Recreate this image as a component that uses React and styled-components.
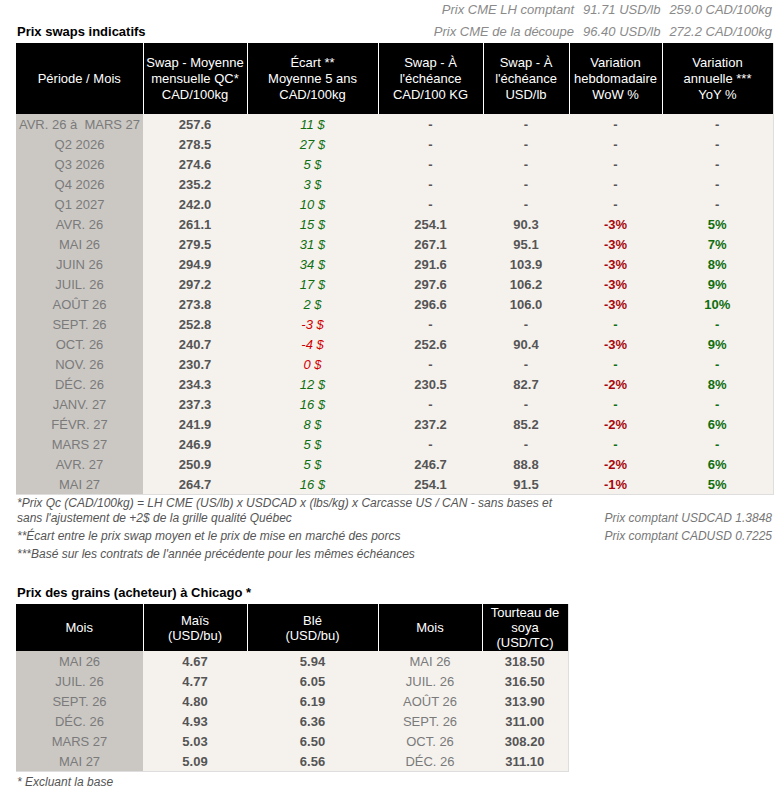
import React from "react";
import styled, { createGlobalStyle } from "styled-components";

const GlobalStyle = createGlobalStyle`
  body {
    margin: 0;
    background: #fff;
    font-family: "Liberation Sans", Arial, Helvetica, sans-serif;
    font-size: 13px;
    color: #555;
  }
`;

const Page = styled.div`
  width: 757px;
  padding: 0 4px 0 16px;
`;

const TopBar = styled.div`
  display: flex;
  justify-content: space-between;
  align-items: flex-end;
  height: 43px;
`;

const Title = styled.h2`
  margin: 0 0 0 1px;
  font-size: 13px;
  font-weight: bold;
  color: #000;
  line-height: 22px;
`;

const CmeGrid = styled.div`
  display: grid;
  grid-template-columns: auto auto auto;
  column-gap: 9px;
  font-style: italic;
  color: #8a8a8a;
  font-size: 13px;
  line-height: 22px;
  margin-right: 1px;
`;

const CmeLabel = styled.span`
  text-align: right;
`;

const Table = styled.table`
  border-collapse: collapse;
  table-layout: fixed;
  width: ${(p) => p.$width}px;
  border-right: 1px solid #dedede;
  border-bottom: 1px solid #dedede;
`;

const Th = styled.th`
  background: #000;
  color: #fff;
  font-weight: normal;
  font-size: 13px;
  line-height: ${(p) => p.$lh || 16}px;
  height: ${(p) => p.$h}px;
  padding: 0 1px;
  text-align: center;
  vertical-align: middle;
  border-left: 1px solid #fff;
  &:first-child {
    border-left: none;
  }
`;

const toneColor = {
  up: "#0f6e0f",
  down: "#a8070d",
  neg: "#d00000",
};

const Td = styled.td`
  height: 20px;
  box-sizing: border-box;
  padding: 2px 0 0;
  text-align: center;
  white-space: nowrap;
  font-size: 13px;
  line-height: 18px;
  background: ${(p) => (p.$label ? "#cbc8c4" : "#f5f2ee")};
  color: ${(p) => (p.$tone ? toneColor[p.$tone] : p.$label || p.$plain ? "#7a7a7a" : "#555")};
  font-weight: ${(p) => (p.$label || p.$plain || p.$italic ? "normal" : "bold")};
  font-style: ${(p) => (p.$italic ? "italic" : "normal")};
`;

const Notes = styled.div`
  display: grid;
  grid-template-columns: auto auto;
  justify-content: space-between;
  align-items: end;
  row-gap: 3px;
  padding: 1px 0 0 1px;
  font-style: italic;
  font-size: 12px;
  line-height: 15px;
  color: #555;
`;

const Note = styled.div`
  white-space: nowrap;
`;

const Spot = styled.div`
  text-align: right;
  color: #777;
  padding-right: 1px;
`;

const GrainTitle = styled(Title)`
  margin-top: 19px;
  line-height: 23px;
`;

const FootNote = styled.div`
  font-style: italic;
  font-size: 12px;
  line-height: 20px;
  color: #555;
  padding-left: 1px;
`;

const swapRows = [
  ["AVR. 26 à\u00a0 MARS 27", "257.6", "11 $", "-", "-", "-", "-"],
  ["Q2 2026", "278.5", "27 $", "-", "-", "-", "-"],
  ["Q3 2026", "274.6", "5 $", "-", "-", "-", "-"],
  ["Q4 2026", "235.2", "3 $", "-", "-", "-", "-"],
  ["Q1 2027", "242.0", "10 $", "-", "-", "-", "-"],
  ["AVR. 26", "261.1", "15 $", "254.1", "90.3", "-3%", "5%"],
  ["MAI 26", "279.5", "31 $", "267.1", "95.1", "-3%", "7%"],
  ["JUIN 26", "294.9", "34 $", "291.6", "103.9", "-3%", "8%"],
  ["JUIL. 26", "297.2", "17 $", "297.6", "106.2", "-3%", "9%"],
  ["AOÛT 26", "273.8", "2 $", "296.6", "106.0", "-3%", "10%"],
  ["SEPT. 26", "252.8", "-3 $", "-", "-", "-", "-"],
  ["OCT. 26", "240.7", "-4 $", "252.6", "90.4", "-3%", "9%"],
  ["NOV. 26", "230.7", "0 $", "-", "-", "-", "-"],
  ["DÉC. 26", "234.3", "12 $", "230.5", "82.7", "-2%", "8%"],
  ["JANV. 27", "237.3", "16 $", "-", "-", "-", "-"],
  ["FÉVR. 27", "241.9", "8 $", "237.2", "85.2", "-2%", "6%"],
  ["MARS 27", "246.9", "5 $", "-", "-", "-", "-"],
  ["AVR. 27", "250.9", "5 $", "246.7", "88.8", "-2%", "6%"],
  ["MAI 27", "264.7", "16 $", "254.1", "91.5", "-1%", "5%"],
];

const grainRows = [
  ["MAI 26", "4.67", "5.94", "MAI 26", "318.50"],
  ["JUIL. 26", "4.77", "6.05", "JUIL. 26", "316.50"],
  ["SEPT. 26", "4.80", "6.19", "AOÛT 26", "313.90"],
  ["DÉC. 26", "4.93", "6.36", "SEPT. 26", "311.00"],
  ["MARS 27", "5.03", "6.50", "OCT. 26", "308.20"],
  ["MAI 27", "5.09", "6.56", "DÉC. 26", "311.10"],
];

const ecartTone = (v) => (v.startsWith("-") || v.startsWith("0") ? "neg" : "up");

// les 5 premières lignes (périodes) gardent les tirets gris, les mois vides en vert
const wowTone = (v, i) => (v === "-" ? (i < 5 ? undefined : "up") : "down");
const yoyTone = (v, i) => (v === "-" && i < 5 ? undefined : "up");

const SwapTable = () => (
  <Table $width={757}>
    <colgroup>
      <col style={{ width: 127 }} />
      <col style={{ width: 104 }} />
      <col style={{ width: 131 }} />
      <col style={{ width: 105 }} />
      <col style={{ width: 86 }} />
      <col style={{ width: 93 }} />
      <col style={{ width: 111 }} />
    </colgroup>
    <thead>
      <tr>
        <Th $h={71}>Période / Mois</Th>
        <Th $h={71}>Swap - Moyenne mensuelle QC* CAD/100kg</Th>
        <Th $h={71}>
          Écart **
          <br />
          Moyenne 5 ans
          <br />
          CAD/100kg
        </Th>
        <Th $h={71}>
          Swap - À
          <br />
          l'échéance
          <br />
          CAD/100 KG
        </Th>
        <Th $h={71}>
          Swap - À
          <br />
          l'échéance
          <br />
          USD/lb
        </Th>
        <Th $h={71}>
          Variation
          <br />
          hebdomadaire
          <br />
          WoW %
        </Th>
        <Th $h={71}>
          Variation
          <br />
          annuelle ***
          <br />
          YoY %
        </Th>
      </tr>
    </thead>
    <tbody>
      {swapRows.map((r, i) => (
        <tr key={r[0]}>
          <Td $label>{r[0]}</Td>
          <Td>{r[1]}</Td>
          <Td $italic $tone={ecartTone(r[2])}>
            {r[2]}
          </Td>
          <Td>{r[3]}</Td>
          <Td>{r[4]}</Td>
          <Td $tone={wowTone(r[5], i)}>{r[5]}</Td>
          <Td $tone={yoyTone(r[6], i)}>{r[6]}</Td>
        </tr>
      ))}
    </tbody>
  </Table>
);

const GrainTable = () => (
  <Table $width={552}>
    <colgroup>
      <col style={{ width: 127 }} />
      <col style={{ width: 104 }} />
      <col style={{ width: 131 }} />
      <col style={{ width: 104 }} />
      <col style={{ width: 86 }} />
    </colgroup>
    <thead>
      <tr>
        <Th $h={47} $lh={15}>Mois</Th>
        <Th $h={47} $lh={15}>
          Maïs
          <br />
          (USD/bu)
        </Th>
        <Th $h={47} $lh={15}>
          Blé
          <br />
          (USD/bu)
        </Th>
        <Th $h={47} $lh={15}>Mois</Th>
        <Th $h={47} $lh={15}>
          Tourteau de
          <br />
          soya
          <br />
          (USD/TC)
        </Th>
      </tr>
    </thead>
    <tbody>
      {grainRows.map((r) => (
        <tr key={r[0]}>
          <Td $label>{r[0]}</Td>
          <Td>{r[1]}</Td>
          <Td>{r[2]}</Td>
          <Td $plain>{r[3]}</Td>
          <Td>{r[4]}</Td>
        </tr>
      ))}
    </tbody>
  </Table>
);

const App = () => (
  <>
    <GlobalStyle />
    <Page>
      <TopBar>
        <Title>Prix swaps indicatifs</Title>
        <CmeGrid>
          <CmeLabel>Prix CME LH comptant</CmeLabel>
          <span>91.71 USD/lb</span>
          <span>259.0 CAD/100kg</span>
          <CmeLabel>Prix CME de la découpe</CmeLabel>
          <span>96.40 USD/lb</span>
          <span>272.2 CAD/100kg</span>
        </CmeGrid>
      </TopBar>
      <SwapTable />
      <Notes>
        <Note>
          *Prix Qc (CAD/100kg) = LH CME (US/lb) x USDCAD x (lbs/kg) x Carcasse US / CAN - sans bases et
          <br />
          sans l'ajustement de +2$ de la grille qualité Québec
        </Note>
        <Spot>Prix comptant USDCAD 1.3848</Spot>
        <Note>**Écart entre le prix swap moyen et le prix de mise en marché des porcs</Note>
        <Spot>Prix comptant CADUSD 0.7225</Spot>
        <Note>***Basé sur les contrats de l'année précédente pour les mêmes échéances</Note>
      </Notes>
      <GrainTitle>Prix des grains (acheteur) à Chicago *</GrainTitle>
      <GrainTable />
      <FootNote>* Excluant la base</FootNote>
    </Page>
  </>
);

export default App;
